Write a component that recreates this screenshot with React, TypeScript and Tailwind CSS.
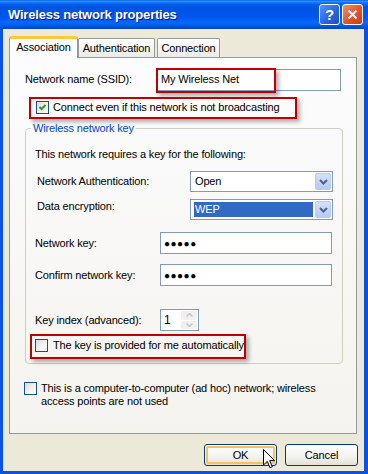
import React from "react";

// ================= SMALL XP CONTROLS =================
function CheckBox({ checked }: { checked?: boolean }) {
  return (
    <span className="relative inline-block w-[13px] h-[13px] shrink-0 border border-[#1c5180] bg-[linear-gradient(135deg,#dcdcd7_0%,#f4f4f0_60%,#ffffff_100%)]">
      {checked && (
        <svg viewBox="0 0 11 11" className="absolute left-0 top-0 w-[11px] h-[11px]">
          <path d="M2.5 5 L4.5 7 L8.5 3" stroke="#21a121" strokeWidth="2" fill="none" />
        </svg>
      )}
    </span>
  );
}

function Chevron() {
  return (
    <svg viewBox="0 0 9 6" className="w-[9px] h-[6px]">
      <path d="M1 1 L4.5 4.5 L8 1" stroke="#4d6185" strokeWidth="2" fill="none" />
    </svg>
  );
}

function Select({ value, highlighted }: { value: string; highlighted?: boolean }) {
  return (
    <div className="w-[143px] h-[21px] border border-[#7f9db9] bg-white flex items-center p-[1px]">
      <div className="flex-1 h-full flex items-center pl-[2px] pr-[2px]">
        <span
          className={
            highlighted
              ? "w-full h-[15px] bg-[#316ac5] text-white leading-[15px] pl-[1px]"
              : "pl-[1px]"
          }
        >
          {value}
        </span>
      </div>
      <div className="w-[16px] h-[17px] rounded-[2px] border border-[#b9cbf3] bg-[linear-gradient(to_bottom,#d4e0fc,#b6caf6)] flex items-center justify-center">
        <Chevron />
      </div>
    </div>
  );
}

function TextBox({ w, children }: { w: string; children?: React.ReactNode }) {
  return (
    <div className={`${w} h-[22px] border border-[#7f9db9] bg-white flex items-center pl-[3px]`}>
      {children}
    </div>
  );
}

function Dots() {
  return <span className="text-[10px] tracking-[0.5px] text-black">●●●●●</span>;
}

function RedMark({ className }: { className: string }) {
  return (
    <div
      className={`absolute border-2 border-[#bf0000] shadow-[3px_3px_4px_rgba(0,0,0,0.3)] pointer-events-none ${className}`}
    />
  );
}

function XPButton({ label, focused }: { label: string; focused?: boolean }) {
  return (
    <div className="w-[73px] h-[22px] rounded-[3px] border border-[#003c74] bg-[linear-gradient(to_bottom,#ffffff_0%,#f3f2ee_60%,#e3e0d7_100%)] p-[1px]">
      <div
        className={
          focused
            ? "w-full h-full rounded-[2px] shadow-[inset_0_0_0_2px_#f8c060] flex items-center justify-center"
            : "w-full h-full flex items-center justify-center"
        }
      >
        {label}
      </div>
    </div>
  );
}

export default function App() {
  return (
    <div className="w-[368px] h-[474px] bg-[#0a52e2] flex flex-col font-['Liberation_Sans',Arial,sans-serif] text-[11px] leading-[13px] tracking-[-0.15px] text-black overflow-hidden">
      {/* ================= TITLE BAR ================= */}
      <div className="h-[29px] shrink-0 flex items-center pl-[8px] pr-[5px] bg-[linear-gradient(to_bottom,#0058ee_0%,#3593ff_4%,#127dff_8%,#0262ee_14%,#0057e5_20%,#0054e3_24%,#0055eb_56%,#005bf5_66%,#026afe_76%,#0062ef_86%,#0052d6_92%,#0046c8_100%)]">
        <span className="text-white font-bold text-[13px] tracking-[-0.2px] [text-shadow:1px_1px_0_#0a1883]">
          Wireless network properties
        </span>
        <div className="ml-auto flex gap-[2px]">
          <div className="w-[21px] h-[21px] rounded-[3px] border border-white bg-[linear-gradient(135deg,#5c93f5,#2563e0_60%,#1d4fc5)] flex items-center justify-center text-white font-bold text-[15px] leading-none">
            ?
          </div>
          <div className="w-[21px] h-[21px] rounded-[3px] border border-white bg-[linear-gradient(135deg,#f0906e,#e0532a_55%,#c8401b)] flex items-center justify-center">
            <svg viewBox="0 0 11 11" className="w-[11px] h-[11px]">
              <path d="M1.5 1.5 L9.5 9.5 M9.5 1.5 L1.5 9.5" stroke="white" strokeWidth="2" />
            </svg>
          </div>
        </div>
      </div>

      {/* ================= BODY ================= */}
      <div className="ml-[3px] mr-[4px] mb-[3px] flex-1 bg-[#ece9d8] flex flex-col pt-[7px] px-[6px] relative">
        {/* tabs */}
        <div className="flex items-end h-[21px] relative z-10">
          <div className="w-[69px] h-[22px] -mb-px rounded-t-[3px] border-x border-[#919b9c] border-t-[3px] border-t-[#ffc73c] bg-[#fcfcfe] flex items-center justify-center pb-[2px]">
            Association
          </div>
          <div className="w-[77px] h-[19px] rounded-t-[2px] border-x border-t border-[#919b9c] bg-[linear-gradient(to_bottom,#ffffff,#ecebe6)] flex items-center justify-center">
            Authentication
          </div>
          <div className="ml-[2px] w-[63px] h-[19px] rounded-t-[2px] border-x border-t border-[#919b9c] bg-[linear-gradient(to_bottom,#ffffff,#ecebe6)] flex items-center justify-center">
            Connection
          </div>
        </div>

        {/* panel */}
        <div className="w-[348px] h-[377px] border border-[#919b9c] bg-[linear-gradient(to_bottom,#fcfcfe,#f4f3ee)] flex flex-col pl-[15px] pt-[10px]">
          <div className="flex items-center h-[23px]">
            <span className="w-[132px]">Network name (SSID):</span>
            <div className="relative">
              <TextBox w="w-[184px]">My Wireless Net</TextBox>
              <RedMark className="-left-px -top-px w-[120px] h-[25px]" />
            </div>
          </div>

          <div className="relative flex items-center gap-[4px] mt-[10px] ml-[11px]">
            <CheckBox checked />
            <span>Connect even if this network is not broadcasting</span>
            <RedMark className="-left-[7px] -top-[4px] w-[268px] h-[22px]" />
          </div>

          <fieldset className="mt-[8px] w-[316px] h-[242px] border border-[#d0d0bf] rounded-[4px] px-[9px]">
            <legend className="-ml-[4px] px-[2px] text-[#0046d5]">Wireless network key</legend>
            <div className="mt-[13px]">This network requires a key for the following:</div>

            <div className="flex items-center mt-[10px] pl-[2px]">
              <span className="w-[153px]">Network Authentication:</span>
              <Select value="Open" />
            </div>
            <div className="flex items-center mt-[7px] pl-[2px]">
              <span className="w-[153px] relative -top-[3px]">Data encryption:</span>
              <Select value="WEP" highlighted />
            </div>

            <div className="flex items-center mt-[12px]">
              <span className="w-[125px]">Network key:</span>
              <TextBox w="w-[172px]">
                <Dots />
              </TextBox>
            </div>
            <div className="flex items-center mt-[10px]">
              <span className="w-[125px]">Confirm network key:</span>
              <TextBox w="w-[172px]">
                <Dots />
              </TextBox>
            </div>

            <div className="flex items-center mt-[23px]">
              <span className="w-[125px]">Key index (advanced):</span>
              <div className="w-[39px] h-[22px] border border-[#7f9db9] bg-white flex p-[1px]">
                <span className="flex-1 pl-[2px] flex items-center text-[12px]">1</span>
                <div className="w-[16px] flex flex-col gap-px">
                  <div className="flex-1 rounded-[2px] bg-[#eef0f2] flex items-center justify-center">
                    <svg viewBox="0 0 7 4" className="w-[7px] h-[4px]">
                      <path d="M0.5 3.5 L3.5 0.5 L6.5 3.5" stroke="#c9c7ba" strokeWidth="1.5" fill="none" />
                    </svg>
                  </div>
                  <div className="flex-1 rounded-[2px] bg-[#eef0f2] flex items-center justify-center">
                    <svg viewBox="0 0 7 4" className="w-[7px] h-[4px]">
                      <path d="M0.5 0.5 L3.5 3.5 L6.5 0.5" stroke="#c9c7ba" strokeWidth="1.5" fill="none" />
                    </svg>
                  </div>
                </div>
              </div>
            </div>

            <div className="relative flex items-center gap-[5px] mt-[8px]">
              <CheckBox />
              <span>The key is provided for me automatically</span>
              <RedMark className="-left-[5px] -top-[5px] w-[216px] h-[25px]" />
            </div>
          </fieldset>

          <div className="flex items-start gap-[4px] mt-[18px] -ml-[1px]">
            <CheckBox />
            <span className="leading-[13px]">
              This is a computer-to-computer (ad hoc) network; wireless
              <br />
              access points are not used
            </span>
          </div>
        </div>

        {/* buttons */}
        <div className="flex justify-end gap-[8px] mt-[10px]">
          <XPButton label="OK" focused />
          <XPButton label="Cancel" />
        </div>

        {/* mouse pointer */}
        <svg viewBox="0 0 12 20" className="absolute left-[260px] top-[420px] w-[12px] h-[20px]">
          <path d="M0.5 0.5 L0.5 16 L4.3 12.4 L7 18.8 L9.3 17.8 L6.7 11.6 L11.5 11.6 Z" fill="white" stroke="black" strokeWidth="1" />
        </svg>
      </div>
    </div>
  );
}
